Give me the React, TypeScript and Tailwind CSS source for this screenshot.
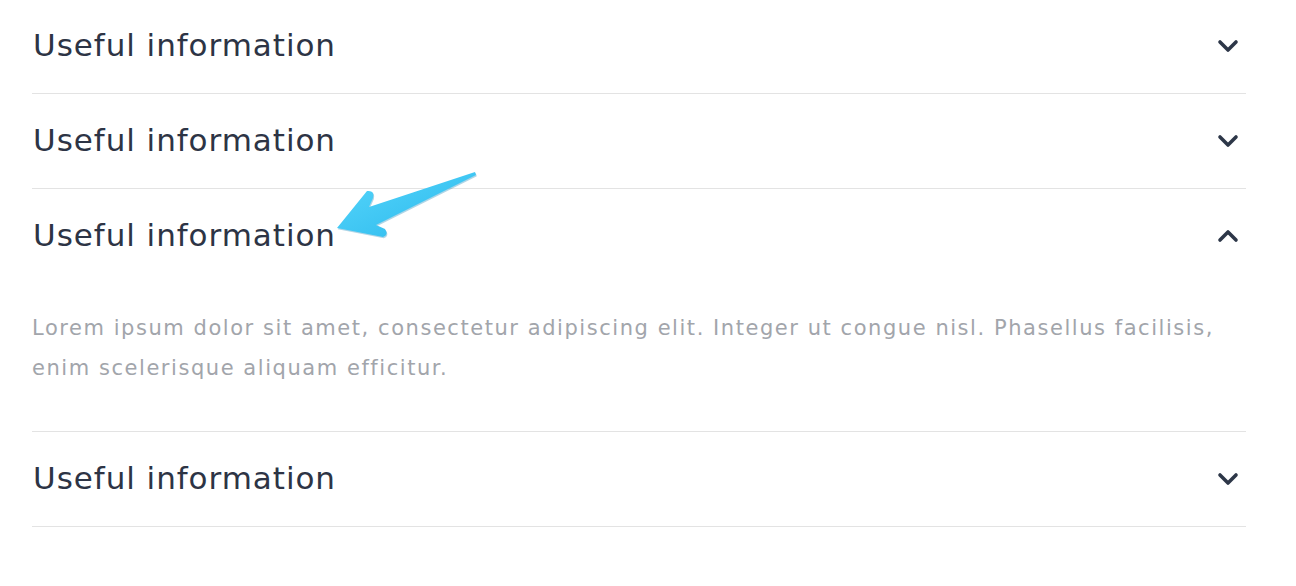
const items = [
  { title: "Useful information", open: false },
  { title: "Useful information", open: false },
  { title: "Useful information", open: true },
  { title: "Useful information", open: false },
];

const Chevron = ({ up }: { up: boolean }) => (
  <svg width="22" height="14" viewBox="0 0 22 14" className="shrink-0">
    <polyline
      points={up ? "3,11 11,3 19,11" : "3,3 11,11 19,3"}
      fill="none"
      stroke="#2d3748"
      strokeWidth="3.6"
      strokeLinecap="round"
      strokeLinejoin="round"
    />
  </svg>
);

const Pointer = () => (
  <svg
    className="absolute left-[320px] top-[160px] pointer-events-none"
    width="170"
    height="90"
    viewBox="320 160 170 90"
  >
    <defs>
      <linearGradient id="ag" x1="0" y1="0" x2="1" y2="1">
        <stop offset="0" stopColor="#56d6fb" />
        <stop offset="1" stopColor="#2bb8ec" />
      </linearGradient>
    </defs>
    <path
      d="M475,172 L369,207 L373,198 Q375,190 367,191 L337,228 L383,237 Q389,235 385,229 L376,225 L476,175 Z"
      fill="#1e88b8"
      opacity="0.35"
      transform="translate(0.8,1.2)"
    />
    <path
      d="M475,172 L369,207 L373,198 Q375,190 367,191 L337,228 L383,237 Q389,235 385,229 L376,225 L476,175 Z"
      fill="url(#ag)"
    />
  </svg>
);

export default function App() {
  return (
    <div
      className="relative w-[1296px] h-[586px] bg-white overflow-hidden"
      style={{ fontFamily: '"DejaVu Sans", sans-serif' }}
    >
      <div className="w-[1214px] ml-[32px] -mt-[1px]">
        {items.map((item, i) => (
          <div key={i} className="border-b border-[#e3e3e3]">
            <div className="h-[94px] flex items-center justify-between pl-[1px] pr-[7px]">
              <span className="-mt-[1px] text-[31px] text-[#2d3445] tracking-[0.95px]">
                {item.title}
              </span>
              <Chevron up={item.open} />
            </div>
            {item.open && (
              <p className="pt-[25px] pb-[43px] text-[21px] leading-[40px] tracking-[1.55px] text-[#a2a5ab]">
                Lorem ipsum dolor sit amet, consectetur adipiscing elit. Integer ut
                congue nisl. Phasellus facilisis, enim scelerisque aliquam efficitur.
              </p>
            )}
          </div>
        ))}
      </div>
      <Pointer />
    </div>
  );
}
